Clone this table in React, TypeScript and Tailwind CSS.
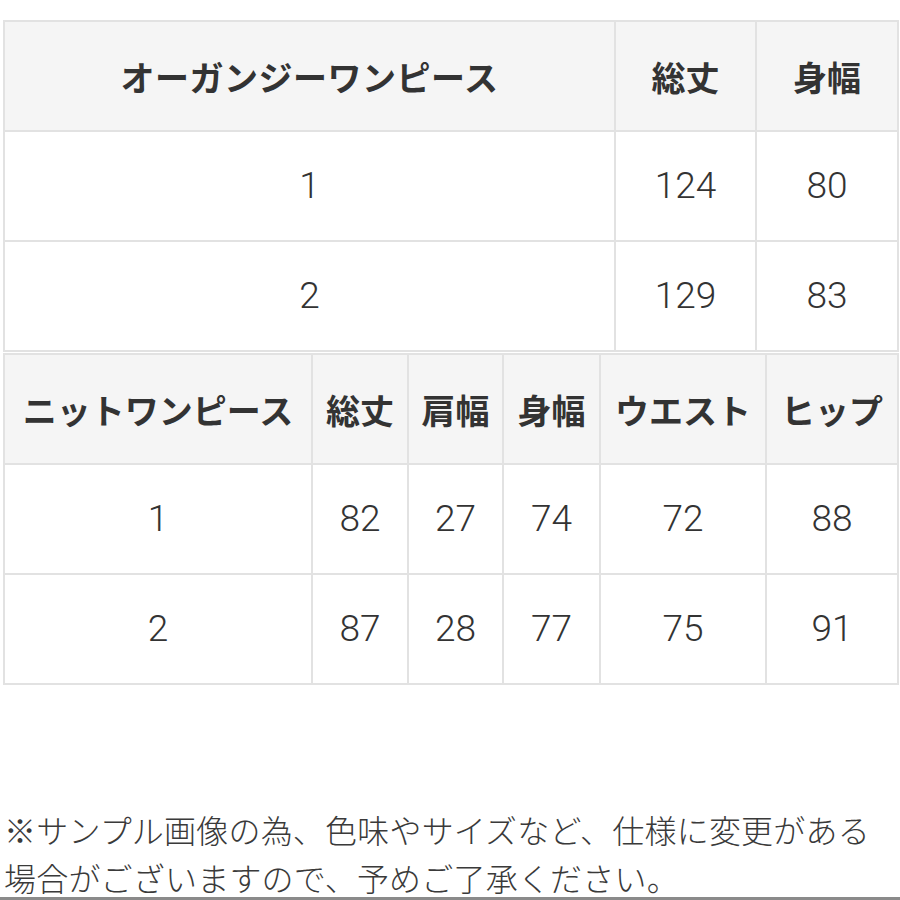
import React from "react";

const font = { fontFamily: '"Noto Sans CJK JP", "Noto Sans", sans-serif' };

export default function App() {
  const t1 = [
    ["1", "124", "80"],
    ["2", "129", "83"],
  ];
  const t2 = [
    ["1", "82", "27", "74", "72", "88"],
    ["2", "87", "28", "77", "75", "91"],
  ];
  const th = "h-[110px] border-2 border-[#e2e2e2] bg-[#f5f5f5] text-center align-middle font-bold text-[34px] text-[#333] p-0 whitespace-nowrap";
  const td = "h-[110px] border-2 border-[#e2e2e2] bg-white text-center align-middle font-light text-[37px] text-[#333] p-0 font-['Roboto',sans-serif]";
  return (
    <div className="w-[900px] h-[900px] bg-white relative overflow-hidden" style={font}>
      <div className="pt-[20px] pl-[3px]">
        <table className="border-collapse table-fixed w-[894px]">
          <colgroup>
            <col className="w-[611px]" />
            <col className="w-[141px]" />
            <col className="w-[142px]" />
          </colgroup>
          <thead>
            <tr>
              <th className={th + " tracking-[0.5px]"}>オーガンジーワンピース</th>
              <th className={th}>総丈</th>
              <th className={th}>身幅</th>
            </tr>
          </thead>
          <tbody>
            {t1.map((r, i) => (
              <tr key={i}>
                {r.map((c, j) => (
                  <td key={j} className={td}>{c}</td>
                ))}
              </tr>
            ))}
          </tbody>
        </table>
        <table className="border-collapse table-fixed w-[894px] mt-[1px]">
          <colgroup>
            <col className="w-[308px]" />
            <col className="w-[96px]" />
            <col className="w-[95px]" />
            <col className="w-[97px]" />
            <col className="w-[166px]" />
            <col className="w-[132px]" />
          </colgroup>
          <thead>
            <tr>
              <th className={th}>ニットワンピース</th>
              <th className={th}>総丈</th>
              <th className={th}>肩幅</th>
              <th className={th}>身幅</th>
              <th className={th}>ウエスト</th>
              <th className={th}>ヒップ</th>
            </tr>
          </thead>
          <tbody>
            {t2.map((r, i) => (
              <tr key={i}>
                {r.map((c, j) => (
                  <td key={j} className={td}>{c}</td>
                ))}
              </tr>
            ))}
          </tbody>
        </table>
      </div>
      <div className="mt-[127px] pl-[4px] flex flex-col gap-[14px] text-[32px] leading-[34px] tracking-[0.2px] text-[#3a3a3a] font-light whitespace-nowrap">
        <p>※サンプル画像の為、色味やサイズなど、仕様に変更がある</p>
        <p>場合がございますので、予めご了承ください。</p>
      </div>
      <div className="absolute left-0 right-0 bottom-0 h-[3px] bg-[#8a8a8a]" />
    </div>
  );
}
